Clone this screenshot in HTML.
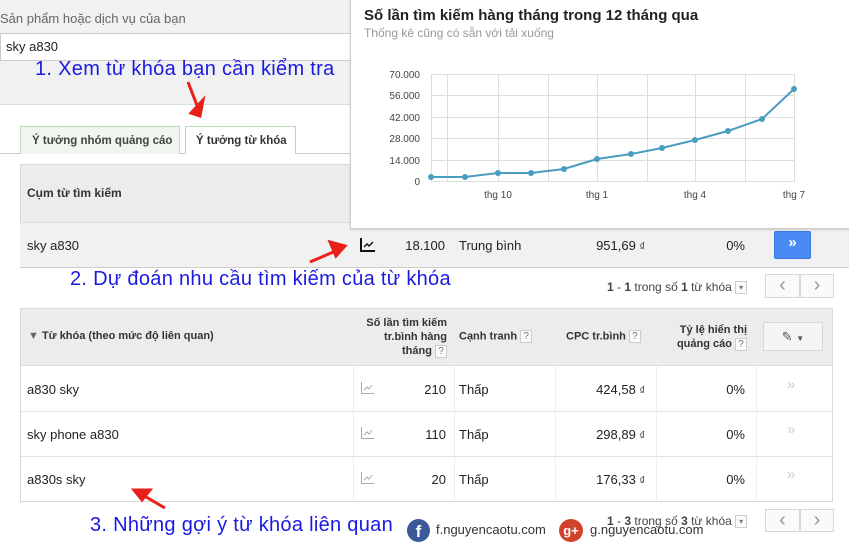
<!DOCTYPE html>
<html><head><meta charset="utf-8"><style>
*{margin:0;padding:0;box-sizing:border-box}
body{width:849px;height:542px;overflow:hidden;background:#fff;font-family:"Liberation Sans",Arial,sans-serif;font-size:13px;color:#222;position:relative}
.a{position:absolute;white-space:nowrap}
.blue{color:#1a1ae0;font-size:20px;letter-spacing:0.3px}
.q{display:inline-block;width:12px;height:13px;border:1px solid #ccc;font-size:10px;color:#777;text-align:center;line-height:11px;vertical-align:middle;background:#fafafa;font-weight:normal}
.pb{position:absolute;border:1px solid #d8d8d8;background:#fafafa;color:#999;font-size:20px;text-align:center;line-height:20px}
</style></head><body>
<div class="a" style="left:0;top:0;width:849px;height:105px;background:#f1f1f1;border-bottom:1px solid #ddd"></div>
<div class="a" style="left:0;top:11px;color:#666;font-size:13px">Sản phẩm hoặc dịch vụ của bạn</div>
<div class="a" style="left:0;top:33px;width:355px;height:28px;background:#fff;border:1px solid #ccc;padding:5px 5px;font-size:13px">sky a830</div>
<div class="a blue" style="left:35px;top:58px">1. Xem từ khóa bạn cần kiểm tra</div>
<div class="a" style="left:0;top:153px;width:849px;border-top:1px solid #ccc"></div>
<div class="a" style="left:20px;top:126px;width:160px;height:28px;background:#eef6ee;border:1px solid #b8d8b8;border-bottom:none;font-weight:bold;font-size:11.5px;color:#444;padding:8px 0 0 11px">Ý tưởng nhóm quảng cáo</div>
<div class="a" style="left:185px;top:126px;width:111px;height:28px;background:#fff;border:1px solid #b8d8b8;border-bottom:none;font-weight:bold;font-size:11.5px;color:#333;padding:8px 0 0 10px">Ý tưởng từ khóa</div>
<!-- table1 -->
<div class="a" style="left:20px;top:164px;width:829px;height:104px;border:1px solid #d8d8d8;background:#ececec"></div>
<div class="a" style="left:20px;top:222px;width:829px;height:46px;background:#f1f1f1;border-top:1px solid #ddd;border-bottom:1px solid #ccc"></div>
<div class="a" style="left:27px;top:186px;font-weight:bold;font-size:12px;color:#333">Cụm từ tìm kiếm</div>
<div class="a" style="left:27px;top:238px;font-size:13px">sky a830</div>
<svg class="a" style="left:360px;top:238px" width="16" height="14"><path d="M1 0V13H15" stroke="#111" stroke-width="2" fill="none"/><path d="M4 9L7 6 9 8 13 4" stroke="#111" stroke-width="1.4" fill="none"/></svg>
<div class="a" style="left:380px;top:238px;width:65px;text-align:right">18.100</div>
<div class="a" style="left:459px;top:238px">Trung bình</div>
<div class="a" style="left:560px;top:238px;width:85px;text-align:right">951,69 <small>₫</small></div>
<div class="a" style="left:700px;top:238px;width:45px;text-align:right">0%</div>
<div class="a" style="left:774px;top:231px;width:37px;height:28px;background:#4a8af4;border:1px solid #3a78e0;border-radius:2px;color:#fff;font-weight:bold;font-size:15px;text-align:center;line-height:22px">»</div>
<!-- popup -->
<div class="a" style="left:350px;top:0;width:499px;height:229px;background:#fff;border-left:1px solid #ccc;border-bottom:1px solid #ccc;box-shadow:0 1px 2px rgba(0,0,0,.15)"></div>
<div class="a" style="left:364px;top:7px;font-weight:bold;font-size:15px;color:#222">Số lần tìm kiếm hàng tháng trong 12 tháng qua</div>
<div class="a" style="left:364px;top:26px;font-size:12px;color:#999">Thống kê cũng có sẵn với tải xuống</div>
<svg class="a" style="left:350px;top:0" width="499" height="229">
<g stroke="#ddd" stroke-width="1" fill="none">
<rect x="81.5" y="74.5" width="363" height="107"/>
<path d="M81 95.5H445M81 117.5H445M81 138.5H445M81 160.5H445"/>
<path d="M97.5 74V181M148.5 74V181M198.5 74V181M247.5 74V181M297.5 74V181M345.5 74V181M395.5 74V181"/>
</g>
<g font-family="Liberation Sans,Arial,sans-serif" font-size="10" fill="#444" text-anchor="end">
<text x="70" y="78">70.000</text><text x="70" y="99">56.000</text><text x="70" y="121">42.000</text><text x="70" y="142">28.000</text><text x="70" y="164">14.000</text><text x="70" y="185">0</text>
</g>
<g font-family="Liberation Sans,Arial,sans-serif" font-size="10" fill="#444" text-anchor="middle">
<text x="148" y="198">thg 10</text><text x="247" y="198">thg 1</text><text x="345" y="198">thg 4</text><text x="444" y="198">thg 7</text>
</g>
<polyline fill="none" stroke="#4a9cc0" stroke-width="2" points="81,177 115,177 148,173 181,173 214,169 247,159 281,154 312,148 345,140 378,131 412,119 444,89"/>
<g fill="#4a9cc0"><circle cx="81" cy="177" r="3"/><circle cx="115" cy="177" r="3"/><circle cx="148" cy="173" r="3"/><circle cx="181" cy="173" r="3"/><circle cx="214" cy="169" r="3"/><circle cx="247" cy="159" r="3"/><circle cx="281" cy="154" r="3"/><circle cx="312" cy="148" r="3"/><circle cx="345" cy="140" r="3"/><circle cx="378" cy="131" r="3"/><circle cx="412" cy="119" r="3"/><circle cx="444" cy="89" r="3"/></g>
</svg>
<div class="a blue" style="left:70px;top:268px">2. Dự đoán nhu cầu tìm kiếm của từ khóa</div>
<div class="a" style="left:607px;top:280px;font-size:12px;color:#444"><b>1</b> - <b>1</b> trong số <b>1</b> từ khóa <span class="q" style="font-size:8px">▾</span></div>
<div class="pb" style="left:765px;top:274px;width:35px;height:24px">‹</div><div class="pb" style="left:800px;top:274px;width:34px;height:24px">›</div>
<!-- table2 -->
<div class="a" style="left:20px;top:308px;width:813px;height:194px;border:1px solid #d8d8d8;background:#fff"></div>
<div class="a" style="left:21px;top:309px;width:811px;height:57px;background:#ececec;border-bottom:1px solid #ddd"></div>
<div class="a" style="left:21px;top:411px;width:811px;border-top:1px solid #e2e2e2"></div>
<div class="a" style="left:21px;top:456px;width:811px;border-top:1px solid #e2e2e2"></div>
<div class="a" style="left:353px;top:366px;height:135px;border-left:1px solid #eee"></div>
<div class="a" style="left:454px;top:366px;height:135px;border-left:1px solid #eee"></div>
<div class="a" style="left:555px;top:366px;height:135px;border-left:1px solid #eee"></div>
<div class="a" style="left:656px;top:366px;height:135px;border-left:1px solid #eee"></div>
<div class="a" style="left:756px;top:366px;height:135px;border-left:1px solid #eee"></div>
<div class="a" style="left:28px;top:330px;font-size:11px;font-weight:bold;color:#333"><span style="color:#666">▼</span> Từ khóa (theo mức độ liên quan)</div>
<div class="a" style="left:357px;top:316px;width:90px;text-align:right;font-size:11px;font-weight:bold;color:#333;line-height:14px;white-space:normal">Số lần tìm kiếm tr.bình hàng tháng <span class="q">?</span></div>
<div class="a" style="left:459px;top:330px;font-size:11px;font-weight:bold;color:#333">Cạnh tranh <span class="q">?</span></div>
<div class="a" style="left:566px;top:330px;font-size:11px;font-weight:bold;color:#333">CPC tr.bình <span class="q">?</span></div>
<div class="a" style="left:665px;top:323px;width:82px;text-align:right;font-size:11px;font-weight:bold;color:#333;line-height:14px;white-space:normal">Tỷ lệ hiển thị quảng cáo <span class="q">?</span></div>
<div class="a" style="left:763px;top:322px;width:60px;height:29px;border:1px solid #d8d8d8;background:#f5f5f5;text-align:center;line-height:27px;color:#555;font-size:13px">✎ <small style="font-size:8px">▼</small></div>
<div class="a" style="left:27px;top:382px">a830 sky</div>
<div class="a" style="left:27px;top:427px">sky phone a830</div>
<div class="a" style="left:27px;top:472px">a830s sky</div>
<svg class="a" style="left:361px;top:382px" width="13" height="12"><path d="M.5 0V11.5H13M3 8L6 5 8 7 11 3" stroke="#aaa" fill="none"/></svg>
<svg class="a" style="left:361px;top:427px" width="13" height="12"><path d="M.5 0V11.5H13M3 8L6 5 8 7 11 3" stroke="#aaa" fill="none"/></svg>
<svg class="a" style="left:361px;top:472px" width="13" height="12"><path d="M.5 0V11.5H13M3 8L6 5 8 7 11 3" stroke="#aaa" fill="none"/></svg>
<div class="a" style="left:400px;top:382px;width:46px;text-align:right">210</div>
<div class="a" style="left:400px;top:427px;width:46px;text-align:right">110</div>
<div class="a" style="left:400px;top:472px;width:46px;text-align:right">20</div>
<div class="a" style="left:459px;top:382px">Thấp</div><div class="a" style="left:459px;top:427px">Thấp</div><div class="a" style="left:459px;top:472px">Thấp</div>
<div class="a" style="left:560px;top:382px;width:85px;text-align:right">424,58 <small>₫</small></div>
<div class="a" style="left:560px;top:427px;width:85px;text-align:right">298,89 <small>₫</small></div>
<div class="a" style="left:560px;top:472px;width:85px;text-align:right">176,33 <small>₫</small></div>
<div class="a" style="left:700px;top:382px;width:45px;text-align:right">0%</div>
<div class="a" style="left:700px;top:427px;width:45px;text-align:right">0%</div>
<div class="a" style="left:700px;top:472px;width:45px;text-align:right">0%</div>
<div class="a" style="left:787px;top:376px;color:#ccc;font-size:15px">»</div>
<div class="a" style="left:787px;top:421px;color:#ccc;font-size:15px">»</div>
<div class="a" style="left:787px;top:466px;color:#ccc;font-size:15px">»</div>
<!-- bottom -->
<div class="a blue" style="left:90px;top:514px">3. Những gợi ý từ khóa liên quan</div>
<div class="a" style="left:407px;top:519px;width:23px;height:23px;border-radius:50%;background:#3b5998;color:#fff;font-weight:bold;font-size:17px;text-align:center;line-height:26px">f</div>
<div class="a" style="left:436px;top:522px;font-size:13px;color:#333">f.nguyencaotu.com</div>
<div class="a" style="left:559px;top:519px;width:24px;height:23px;border-radius:50%;background:#d0422a;color:#fff;font-weight:bold;font-size:13px;text-align:center;line-height:23px">g+</div>
<div class="a" style="left:590px;top:522px;font-size:13px;color:#333">g.nguyencaotu.com</div>
<div class="a" style="left:607px;top:514px;font-size:12px;color:#444"><b>1</b> - <b>3</b> trong số <b>3</b> từ khóa <span class="q" style="font-size:8px">▾</span></div>
<div class="pb" style="left:765px;top:509px;width:35px;height:23px">‹</div><div class="pb" style="left:800px;top:509px;width:34px;height:23px">›</div>
<!-- arrows -->
<svg class="a" style="left:0;top:0" width="849" height="542"><g stroke="#e8201a" stroke-width="3" fill="#e8201a">
<path d="M188 82L198 108"/><path d="M191 113L203 100 200 116Z"/>
<path d="M310 262L338 250"/><path d="M345 246L330 242 336 256Z"/>
<path d="M165 508L141 494"/><path d="M134 490L150 490 142 500Z"/>
</g></svg>
</body></html>
